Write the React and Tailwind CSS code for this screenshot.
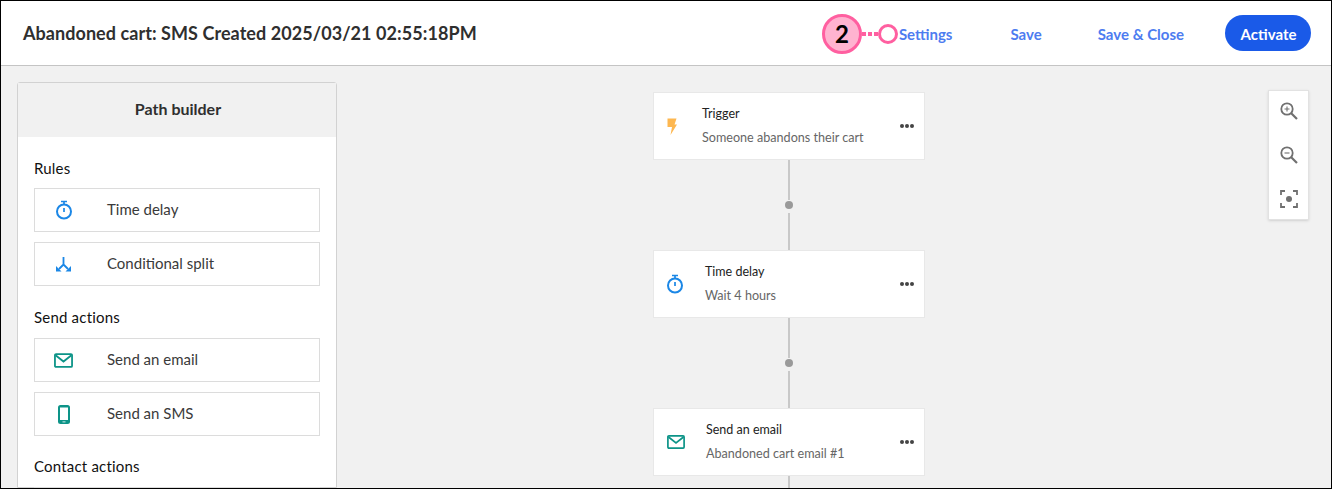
import React from 'react';

const StopwatchIcon = ({ className }) => (
  <svg viewBox="0 0 20 20" className={className} fill="none" stroke="currentColor" strokeWidth="2">
    <circle cx="10" cy="11.500" r="7" />
    <path d="M7 1.500h6M10 1.500v3M10 8v4" strokeWidth="1.700" />
  </svg>
);

const SplitIcon = ({ className }) => (
  <svg viewBox="0 0 15 15" className={className}>
    <path d="M7.500 0v7.500M7.500 7.500l-4.500 4.500M7.500 7.500l4.500 4.500" fill="none" stroke="currentColor" strokeWidth="1.800" />
    <path d="M0 9v5.500h5.500l-2-2 -1.500-1.500zM15 9v5.500h-5.500l2-2 1.500-1.500z" fill="currentColor" />
  </svg>
);

const MailIcon = ({ className }) => (
  <svg viewBox="0 0 18 14" className={className} fill="none" stroke="currentColor" strokeWidth="1.700">
    <rect x="0.900" y="0.900" width="16.200" height="12.200" rx="1" />
    <path d="M1.500 2l7.500 6 7.500-6" />
  </svg>
);

const PhoneIcon = ({ className }) => (
  <svg viewBox="0 0 12 19" className={className}>
    <rect x="0" y="0" width="12" height="19" rx="2.500" fill="currentColor" />
    <rect x="2" y="2.500" width="8" height="12.500" fill="#fff" />
    <rect x="4.500" y="16.500" width="3" height="0.800" fill="#fff" />
  </svg>
);

const BoltIcon = ({ className }) => (
  <svg viewBox="0 0 10 17" className={className}>
    <path d="M0.500 0.500h9l-2 6h2.500l-6.500 10.500 1.500-8h-4.500z" fill="currentColor" />
  </svg>
);

const ZoomInIcon = ({ className, minus }) => (
  <svg viewBox="0 0 18 18" className={className} fill="none" stroke="currentColor" strokeWidth="1.800">
    <circle cx="7" cy="7" r="5.700" />
    <path d="M11 11l6 6" strokeWidth="2.200" />
    <path d={minus ? 'M4.500 7h5' : 'M4.500 7h5M7 4.500v5'} strokeWidth="1.100" />
  </svg>
);

const FocusIcon = ({ className }) => (
  <svg viewBox="0 0 18 18" className={className} fill="none" stroke="currentColor" strokeWidth="1.800">
    <path d="M1 5V1h4M13 1h4v4M17 13v4h-4M5 17H1v-4" />
    <circle cx="9" cy="9" r="3" fill="currentColor" stroke="none" />
  </svg>
);

const PathItem = ({ icon, label }) => (
  <div className="h-[44px] mb-[10px] border border-[#dcdcdc] flex items-center bg-white">
    <div className="w-[57px] flex justify-center shrink-0">{icon}</div>
    <span className="ml-[15px] text-[15px] mb-[2px] text-[#3a3a3a]">{label}</span>
  </div>
);

const FlowCard = ({ icon, title, detail, textOffset }) => (
  <div className="w-[272px] h-[68px] bg-white border border-[#e8e8e8] flex items-center relative shrink-0">
    <div className="w-[44px] flex justify-center shrink-0">{icon}</div>
    <div className={`flex flex-col gap-[7px] mb-[2px] ${textOffset}`}>
      <span className="text-[12.500px] leading-[17px] text-[#222]">{title}</span>
      <span className="text-[12.600px] leading-[17px] text-[#666]">{detail}</span>
    </div>
    <div className="ml-auto mr-[10px] flex gap-[1px] mb-[1px]">
      <span className="w-[4px] h-[4px] rounded-full bg-[#444]" />
      <span className="w-[4px] h-[4px] rounded-full bg-[#444]" />
      <span className="w-[4px] h-[4px] rounded-full bg-[#444]" />
    </div>
  </div>
);

const Connector = () => (
  <div className="flex flex-col items-center h-[90px] shrink-0">
    <div className="w-[2px] h-[40px] bg-[#c8c8c8]" />
    <div className="w-[8px] h-[8px] rounded-full bg-[#9a9a9a] my-[1px]" />
    <div className="w-[2px] flex-1 bg-[#c8c8c8] mt-[3px]" />
  </div>
);

export default function App() {
  return (
    <div className="w-[1332px] h-[489px] border border-black overflow-hidden relative flex flex-col bg-[#f1f1f1] font-['Lato','Noto_Sans',sans-serif]">
      {/* Top bar */}
      <div className="h-[65px] shrink-0 bg-white border-b border-[#c4c4c4] flex items-center pl-[22px] pr-[20px]">
        <h1 className="text-[18px] font-bold text-[#2f2f2f] tracking-[0.060px]">Abandoned cart: SMS Created 2025/03/21 02:55:18PM</h1>
        <div className="ml-auto flex items-center text-[15px] font-bold text-[#4d7cf0]">
          <span className="mt-[2px]">Settings</span>
          <span className="ml-[58px] mt-[2px]">Save</span>
          <span className="ml-[56px] mt-[2px]">Save &amp; Close</span>
          <button className="ml-[41px] w-[86px] h-[36px] pt-[2px] pl-[1px] rounded-full bg-[#1a5ae8] text-white font-bold">Activate</button>
        </div>
      </div>

      {/* Callout marker */}
      <div className="absolute left-[821px] top-[13px] flex items-center">
        <div className="w-[40px] h-[40px] rounded-full bg-[#ffb3d0] border-[3px] border-[#ff5fa0] flex items-center justify-center text-[24px] font-bold text-black">2</div>
        <div className="flex gap-[2px]">
          <span className="w-[4px] h-[4px] bg-[#ff5fa0]" />
          <span className="w-[4px] h-[4px] bg-[#ff5fa0]" />
          <span className="w-[4px] h-[4px] bg-[#ff5fa0]" />
        </div>
        <div className="w-[20px] h-[20px] rounded-full bg-white border-[3px] border-[#ff5fa0]" />
      </div>

      <div className="flex-1 flex min-h-0 relative">
        {/* Path builder */}
        <div className="w-[320px] ml-[16px] mt-[16px] shrink-0 border border-[#d2d2d2] rounded-t-[3px] bg-white">
          <div className="h-[54px] pb-[2px] pl-[2px] bg-[#f1f1f1] flex items-center justify-center text-[16px] font-bold text-[#2f2f2f]">Path builder</div>
          <div className="px-[16px]">
            <div className="text-[15px] tracking-[0.200px] text-[#111] mt-[21px] mb-[10px] leading-[20px]">Rules</div>
            <PathItem icon={<StopwatchIcon className="w-[20px] h-[20px] text-[#1b87e6]" />} label="Time delay" />
            <PathItem icon={<SplitIcon className="w-[15px] h-[15px] text-[#1b87e6]" />} label="Conditional split" />
            <div className="text-[15px] tracking-[0.200px] text-[#111] mt-[21px] mb-[11px] leading-[20px]">Send actions</div>
            <PathItem icon={<MailIcon className="w-[19px] h-[15px] text-[#0d9488]" />} label="Send an email" />
            <PathItem icon={<PhoneIcon className="w-[12px] h-[19px] text-[#0d9488]" />} label="Send an SMS" />
            <div className="text-[15px] tracking-[0.200px] text-[#111] mt-[20px] mb-[11px] leading-[20px]">Contact actions</div>
            <div className="h-[44px] border border-[#dcdcdc]" />
          </div>
        </div>

        {/* Flow */}
        <div className="ml-[316px] mt-[26px] flex flex-col items-center">
          <FlowCard icon={<BoltIcon className="w-[10px] h-[17px] mr-[9px] text-[#fdb750]" />} title="Trigger" detail="Someone abandons their cart" textOffset="ml-[4px]" />
          <Connector />
          <FlowCard icon={<StopwatchIcon className="w-[20px] h-[20px] mr-[2px] text-[#1b87e6]" />} title="Time delay" detail="Wait 4 hours" textOffset="ml-[7px]" />
          <Connector />
          <FlowCard icon={<MailIcon className="w-[18px] h-[14px] text-[#0d9488]" />} title="Send an email" detail="Abandoned cart email #1" textOffset="ml-[8px]" />
          <div className="w-[2px] h-[20px] bg-[#c8c8c8] shrink-0" />
        </div>

        {/* Zoom controls */}
        <div className="absolute left-[1267px] top-[24px] w-[41px] h-[130px] bg-white border border-[#e2e2e2] shadow-sm flex flex-col items-center gap-[26px] pt-[11px] text-[#707070]">
          <ZoomInIcon className="w-[18px] h-[18px]" />
          <ZoomInIcon className="w-[18px] h-[18px]" minus />
          <FocusIcon className="w-[18px] h-[18px]" />
        </div>
      </div>
    </div>
  );
}
